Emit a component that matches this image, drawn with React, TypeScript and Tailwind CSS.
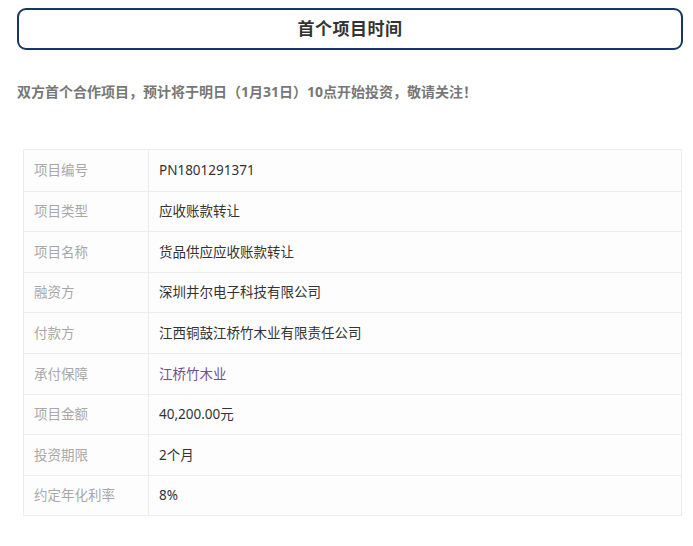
import React from "react";

const rows: { label: string; value: string; purple?: boolean }[] = [
  { label: "项目编号", value: "PN1801291371" },
  { label: "项目类型", value: "应收账款转让" },
  { label: "项目名称", value: "货品供应应收账款转让" },
  { label: "融资方", value: "深圳井尔电子科技有限公司" },
  { label: "付款方", value: "江西铜鼓江桥竹木业有限责任公司" },
  { label: "承付保障", value: "江桥竹木业", purple: true },
  { label: "项目金额", value: "40,200.00元" },
  { label: "投资期限", value: "2个月" },
  { label: "约定年化利率", value: "8%" },
];

export default function App() {
  return (
    <div
      className="w-[693px] h-[546px] bg-white"
      style={{ fontFamily: '"Noto Sans", "Noto Sans CJK SC", sans-serif' }}
    >
      <div className="pt-[8px] pl-[17px] pr-[10px]">
        <div className="h-[42px] rounded-[9px] border-2 border-[#173766] flex items-center justify-center">
          <span className="text-[17px] font-bold text-[#333] tracking-[0.5px]">首个项目时间</span>
        </div>
      </div>
      <div className="pl-[17px] mt-[32px] text-[14px] font-bold text-[#777] leading-[20px]">
        双方首个合作项目，预计将于明日（1月31日）10点开始投资，敬请关注！
      </div>
      <div className="ml-[23px] mr-[11px] mt-[47px] border border-[#ececec] bg-[#fefdfe]">
        {rows.map((r, i) => (
          <div
            key={r.label}
            className={`flex h-[40.6px] items-center ${i > 0 ? "border-t border-[#ececec]" : ""}`}
          >
            <div className="w-[125px] h-full flex items-center pl-[10px] border-r border-[#ececec] text-[13.5px] text-[#a8a8a8]">
              {r.label}
            </div>
            <div
              className={`pl-[10px] text-[13.5px] ${r.purple ? "text-[#74508f]" : "text-[#333]"}`}
            >
              {r.value}
            </div>
          </div>
        ))}
      </div>
    </div>
  );
}
